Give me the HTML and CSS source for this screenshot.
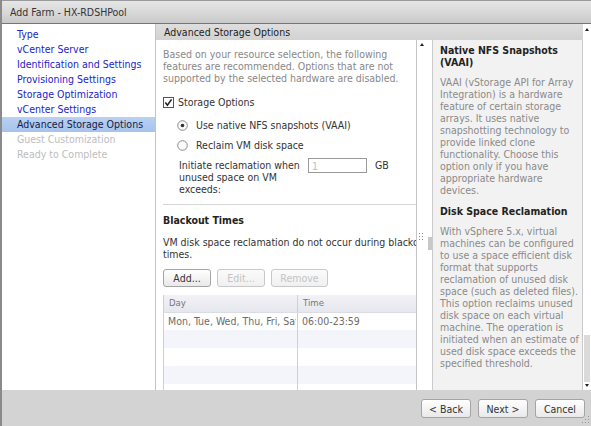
FILE: index.html
```html
<!DOCTYPE html>
<html lang="en">
  <head>
    <meta charset="UTF-8" />
    <title>Add Farm - HX-RDSHPool</title>
    <link rel="stylesheet" href="styles.css">
  </head>
  <body>
    <div class="dialog">
      <div class="titlebar">Add Farm - HX-RDSHPool</div>
      <div class="dialog-body">
        <ul class="steps">
          <li>Type</li>
          <li>vCenter Server</li>
          <li>Identification and Settings</li>
          <li>Provisioning Settings</li>
          <li>Storage Optimization</li>
          <li>vCenter Settings</li>
          <li class="current">Advanced Storage Options</li>
          <li class="disabled">Guest Customization</li>
          <li class="disabled">Ready to Complete</li>
        </ul>
        <div class="page">
          <div class="page-main">
            <div class="page-head">Advanced Storage Options</div>
            <div class="panes">
              <div class="form-pane">
                <p class="intro">Based on your resource selection, the following features are recommended. Options that are not supported by the selected hardware are disabled.</p>
                <div class="check-row">
                  <svg class="checkbox" width="11" height="11" viewBox="0 0 11 11">
                    <rect x="0.5" y="0.5" width="10" height="10" fill="#fff" stroke="#555"/>
                    <path d="M2.3 5.6 L4.4 8.2 L8.6 2.4" fill="none" stroke="#222" stroke-width="1.6"/>
                  </svg>
                  Storage Options
                </div>
                <div class="options">
                  <div class="radio-row">
                    <svg class="radio" width="11" height="11" viewBox="0 0 11 11">
                      <circle cx="5.5" cy="5.5" r="4.8" fill="#fafafa" stroke="#8c8c8c"/>
                      <circle cx="5.5" cy="5.5" r="1.8" fill="#333"/>
                    </svg>
                    Use native NFS snapshots (VAAI)
                  </div>
                  <div class="radio-row">
                    <svg class="radio" width="11" height="11" viewBox="0 0 11 11">
                      <circle cx="5.5" cy="5.5" r="4.8" fill="#fafafa" stroke="#8c8c8c"/>
                    </svg>
                    Reclaim VM disk space
                  </div>
                  <div class="threshold">
                    <span class="threshold-label">Initiate reclamation when unused space on VM exceeds:</span>
                    <input class="gb-input" type="text" value="1" disabled>
                    <span class="unit">GB</span>
                  </div>
                </div>
                <hr class="divider">
                <h3 class="section-title">Blackout Times</h3>
                <p class="blackout-note">VM disk space reclamation do not occur during blackout times.</p>
                <div class="btn-row">
                  <button class="btn">Add...</button>
                  <button class="btn" disabled>Edit...</button>
                  <button class="btn wide" disabled>Remove</button>
                </div>
                <table class="grid">
                  <thead>
                    <tr><th class="col-day">Day</th><th>Time</th></tr>
                  </thead>
                  <tbody>
                    <tr><td class="col-day"><div class="cell-clip">Mon, Tue, Wed, Thu, Fri, Sat, Sun</div></td><td>06:00-23:59</td></tr>
                    <tr><td class="col-day"></td><td></td></tr>
                    <tr><td class="col-day"></td><td></td></tr>
                    <tr><td class="col-day"></td><td></td></tr>
                    <tr><td class="col-day"></td><td></td></tr>
                  </tbody>
                </table>
              </div>
              <div class="splitter">
                <span class="arrow-up"></span>
                <svg class="grip" width="5" height="8" viewBox="0 0 5 8">
                  <rect x="0" y="0" width="1" height="1" fill="#888"/><rect x="3" y="0" width="1" height="1" fill="#888"/>
                  <rect x="0" y="3" width="1" height="1" fill="#888"/><rect x="3" y="3" width="1" height="1" fill="#888"/>
                  <rect x="0" y="6" width="1" height="1" fill="#888"/><rect x="3" y="6" width="1" height="1" fill="#888"/>
                </svg>
                <span class="split-thumb"></span>
              </div>
              <div class="help-pane">
                <h4>Native NFS Snapshots (VAAI)</h4>
                <p>VAAI (vStorage API for Array Integration) is a hardware feature of certain storage arrays. It uses native snapshotting technology to provide linked clone functionality. Choose this option only if you have appropriate hardware devices.</p>
                <h4>Disk Space Reclamation</h4>
                <p>With vSphere 5.x, virtual machines can be configured to use a space efficient disk format that supports reclamation of unused disk space (such as deleted files). This option reclaims unused disk space on each virtual machine. The operation is initiated when an estimate of used disk space exceeds the specified threshold.</p>
              </div>
            </div>
          </div>
          <div class="outer-scroll">
            <span class="arrow-up"></span>
            <span class="scroll-thumb"></span>
            <span class="arrow-down"></span>
          </div>
        </div>
      </div>
      <div class="footer">
        <button class="btn">&lt; Back</button>
        <button class="btn">Next &gt;</button>
        <button class="btn">Cancel</button>
        <svg class="resize-grip" width="8" height="8" viewBox="0 0 8 8">
          <rect x="6" y="0" width="1" height="1" fill="#999"/>
          <rect x="3" y="3" width="1" height="1" fill="#999"/><rect x="6" y="3" width="1" height="1" fill="#999"/>
          <rect x="0" y="6" width="1" height="1" fill="#999"/><rect x="3" y="6" width="1" height="1" fill="#999"/><rect x="6" y="6" width="1" height="1" fill="#999"/>
        </svg>
      </div>
    </div>
  </body>
</html>
```

FILE: styles.css
```css
* {
  margin: 0;
  padding: 0;
  box-sizing: border-box;
}
body {
  font-family: "DejaVu Sans Condensed", "DejaVu Sans", sans-serif;
  font-size: 10.5px;
  color: #333;
  background: #d3d3d3;
  width: 591px;
  height: 426px;
  overflow: hidden;
}
.dialog {
  width: 591px;
  height: 426px;
  display: flex;
  flex-direction: column;
  border-left: 2px solid #8a8a8a;
}
.titlebar {
  height: 24px;
  line-height: 22px;
  padding-left: 8px;
  color: #333;
  border-top: 1px solid #9a9a9a;
  border-bottom: 1px solid #767676;
  background: linear-gradient(#e6e6e6, #d9d9d9 50%, #c9c9c9);
}
.dialog-body {
  display: flex;
  height: 366px;
}
.steps {
  list-style: none;
  width: 153px;
  background: #fff;
  padding-top: 3px;
}
.steps li {
  height: 15px;
  line-height: 15px;
  padding-left: 15px;
  color: #2424c8;
  white-space: nowrap;
}
.steps li.current {
  color: #16204a;
  background: linear-gradient(#b9d1f1, #a6c3ec);
}
.steps li.disabled {
  color: #bdbdbd;
}
.page {
  display: flex;
  width: 436px;
  border-left: 1px solid #c4c4c4;
  background: #fff;
}
.page-main {
  width: 427px;
  display: flex;
  flex-direction: column;
}
.page-head {
  height: 16px;
  line-height: 16px;
  padding-left: 8px;
  color: #222;
  background: linear-gradient(#dedede, #d2d2d2);
}
.panes {
  display: flex;
  height: 350px;
}
.form-pane {
  width: 261px;
  border-right: 1px solid #c4c4c4;
  padding: 8px 0 0 7px;
  overflow: hidden;
  line-height: 12px;
}
.intro {
  width: 246px;
  color: #888;
}
.check-row,
.radio-row {
  display: flex;
  align-items: center;
  height: 14px;
  white-space: nowrap;
  gap: 4px;
}
.check-row {
  margin-top: 11px;
}
.options {
  padding-left: 14px;
}
.radio-row {
  margin-top: 9px;
  gap: 8px;
}
.radio-row + .radio-row {
  margin-top: 6px;
}
.threshold {
  display: flex;
  align-items: flex-start;
  margin-top: 7px;
  padding-left: 2px;
}
.threshold-label {
  width: 124px;
}
.gb-input {
  width: 59px;
  height: 15px;
  margin: -1px 0 0 5px;
  border: 1px solid #9a9a9a;
  background: #fff;
  font: inherit;
  color: #c0c0c0;
  padding-left: 3px;
}
.unit {
  margin-left: 8px;
}
.divider {
  border: none;
  border-top: 1px solid #d6d6d6;
  margin-top: 9px;
}
.section-title {
  font-size: 10.5px;
  line-height: 14px;
  margin-top: 8px;
  color: #222;
}
.blackout-note {
  width: 285px;
  margin-top: 9px;
}
.btn-row {
  display: flex;
  gap: 6px;
  margin-top: 9px;
}
.btn {
  width: 48px;
  height: 18px;
  font: inherit;
  color: #333;
  border: 1px solid #a4a4a4;
  border-radius: 3px;
  background: linear-gradient(#ffffff, #e9e9e9);
}
.btn.wide {
  width: 57px;
}
.btn:disabled {
  color: #c4c4c4;
  border-color: #c8c8c8;
  background: linear-gradient(#fbfbfb, #f0f0f0);
}
.grid {
  margin-top: 8px;
  width: 270px;
  border-collapse: collapse;
  table-layout: fixed;
  color: #6c6c6c;
  border-left: 1px solid #d0d0d0;
}
.grid th {
  height: 17px;
  text-align: left;
  font-weight: normal;
  font-size: 9.5px;
  color: #777;
  padding-left: 5px;
  background: linear-gradient(#f2f2f6, #e6e6ee);
  border-bottom: 1px solid #dcdce4;
}
.grid td {
  height: 18px;
  padding-left: 4px;
  white-space: nowrap;
}
.grid .col-day {
  width: 134px;
  border-right: 1px solid #d0d0d0;
}
.grid tbody tr:nth-child(even) {
  background: #f4f5fb;
}
.cell-clip {
  overflow: hidden;
  width: 128px;
}
.splitter {
  position: relative;
  width: 15px;
  background: #fff;
}
.arrow-up,
.arrow-down {
  display: block;
  width: 0;
  height: 0;
  border-left: 2.5px solid transparent;
  border-right: 2.5px solid transparent;
}
.arrow-up {
  border-bottom: 3px solid #222;
}
.arrow-down {
  border-top: 3px solid #222;
}
.splitter .arrow-up {
  margin: 3px 0 0 3px;
}
.grip {
  display: block;
  margin: 187px 0 0 2px;
}
.split-thumb {
  position: absolute;
  left: 11px;
  top: 197px;
  width: 4px;
  height: 13px;
  background: #c8c8c8;
}
.help-pane {
  width: 151px;
  background: #f2f2f2;
  border-left: 1px solid #cacaca;
  border-right: 1px solid #cacaca;
  padding: 4px 3px 0 7px;
  line-height: 12px;
}
.help-pane h4 {
  font-size: 10.5px;
  color: #222;
  padding-right: 6px;
}
.help-pane p {
  color: #8a8a8a;
  margin: 8px 0 9px;
}
.outer-scroll {
  width: 8px;
  display: flex;
  flex-direction: column;
  align-items: center;
  padding: 4px 0 3px;
  background: #fff;
}
.scroll-thumb {
  width: 6px;
  height: 47px;
  margin-top: auto;
  margin-bottom: 2px;
  background: #dadada;
}
.footer {
  position: relative;
  height: 36px;
  display: flex;
  justify-content: flex-end;
  gap: 7px;
  padding: 9px 6px 0 0;
  background: #d3d3d3;
}
.footer .btn {
  width: 50px;
  height: 19px;
}
.resize-grip {
  position: absolute;
  right: 1px;
  bottom: 2px;
}
```
